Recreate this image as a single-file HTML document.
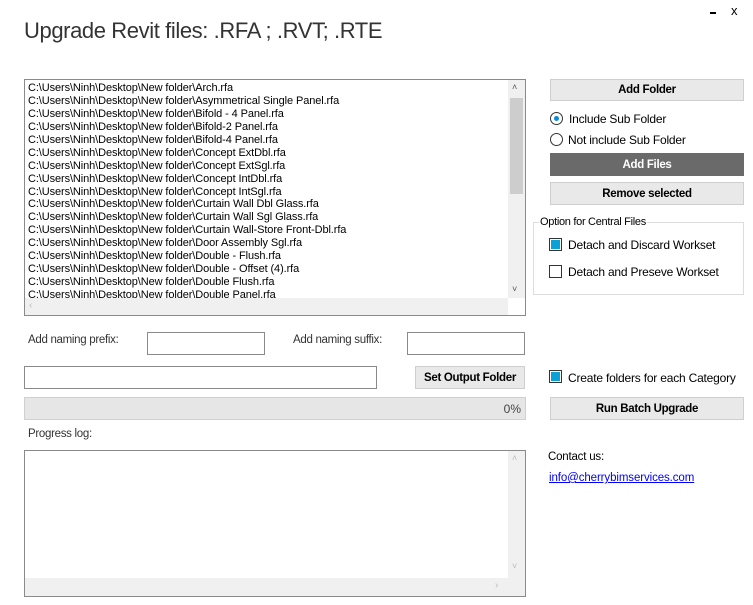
<!DOCTYPE html>
<html><head><meta charset="utf-8"><style>
*{box-sizing:border-box;margin:0;padding:0}
body{width:753px;height:605px;background:#fff;position:relative;overflow:hidden;font-family:"Liberation Sans",sans-serif;color:#000}
.a{position:absolute}
.t{font-size:12px;letter-spacing:-0.2px;white-space:nowrap}
.btn{position:absolute;background:#e9e9e9;border:1px solid #cfcfcf;font-size:11.5px;font-weight:bold;text-align:center;letter-spacing:-0.3px}
.box{position:absolute;border:1px solid #8a8a8a;background:#fff}
.list div{font-size:11px;letter-spacing:-0.1px;height:12.94px;line-height:12.94px;white-space:nowrap}
.cb{position:absolute;width:13px;height:13px;border:1px solid #333;background:#fff}
.cb.on::after{content:"";position:absolute;left:1px;top:1px;width:9px;height:9px;background:#0aa0d8}
.rd{position:absolute;width:13px;height:13px;border:1px solid #333;border-radius:50%;background:#fff}
.rd.on::after{content:"";position:absolute;left:3px;top:3px;width:5px;height:5px;border-radius:50%;background:#0a8ad8}
</style></head><body>
<div class="a" style="left:24px;top:18px;font-size:22px;color:#333;letter-spacing:-0.4px">Upgrade Revit files: .RFA ; .RVT; .RTE</div>
<div class="a" style="left:710px;top:12px;width:6px;height:2px;background:#000"></div>
<div class="a" style="left:731px;top:3px;font-size:13px">x</div>

<div class="box list" style="left:24px;top:79px;width:502px;height:237px;overflow:hidden">
<div style="padding:2px 0 0 3px;height:218px;overflow:hidden">
<div>C:\Users\Ninh\Desktop\New folder\Arch.rfa</div>
<div>C:\Users\Ninh\Desktop\New folder\Asymmetrical Single Panel.rfa</div>
<div>C:\Users\Ninh\Desktop\New folder\Bifold - 4 Panel.rfa</div>
<div>C:\Users\Ninh\Desktop\New folder\Bifold-2 Panel.rfa</div>
<div>C:\Users\Ninh\Desktop\New folder\Bifold-4 Panel.rfa</div>
<div>C:\Users\Ninh\Desktop\New folder\Concept ExtDbl.rfa</div>
<div>C:\Users\Ninh\Desktop\New folder\Concept ExtSgl.rfa</div>
<div>C:\Users\Ninh\Desktop\New folder\Concept IntDbl.rfa</div>
<div>C:\Users\Ninh\Desktop\New folder\Concept IntSgl.rfa</div>
<div>C:\Users\Ninh\Desktop\New folder\Curtain Wall Dbl Glass.rfa</div>
<div>C:\Users\Ninh\Desktop\New folder\Curtain Wall Sgl Glass.rfa</div>
<div>C:\Users\Ninh\Desktop\New folder\Curtain Wall-Store Front-Dbl.rfa</div>
<div>C:\Users\Ninh\Desktop\New folder\Door Assembly Sgl.rfa</div>
<div>C:\Users\Ninh\Desktop\New folder\Double - Flush.rfa</div>
<div>C:\Users\Ninh\Desktop\New folder\Double - Offset (4).rfa</div>
<div>C:\Users\Ninh\Desktop\New folder\Double Flush.rfa</div>
<div>C:\Users\Ninh\Desktop\New folder\Double Panel.rfa</div>
</div>
<div class="a" style="left:483px;top:0;width:17px;height:218px;background:#f0f0f0"></div>
<div class="a" style="left:485px;top:18px;width:13px;height:96px;background:#cdcdcd"></div>
<div class="a" style="left:487px;top:1px;font-size:9px;color:#555">˄</div>
<div class="a" style="left:487px;top:203px;font-size:9px;color:#555">˅</div>
<div class="a" style="left:0;top:218px;width:483px;height:17px;background:#f0f0f0"></div>
<div class="a" style="left:4px;top:220px;font-size:10px;color:#bbb">‹</div>
</div>

<div class="btn" style="left:550px;top:79px;width:194px;height:22px;line-height:20px">Add Folder</div>
<div class="rd on" style="left:550px;top:112px"></div>
<div class="a t" style="left:569px;top:112px">Include Sub Folder</div>
<div class="rd" style="left:550px;top:133px"></div>
<div class="a t" style="left:568px;top:133px">Not include Sub Folder</div>
<div class="btn" style="left:550px;top:153px;width:194px;height:23px;line-height:22px;background:#6a6a6a;border-color:#6a6a6a;color:#fff">Add Files</div>
<div class="btn" style="left:550px;top:182px;width:194px;height:23px;line-height:22px">Remove selected</div>
<div class="a" style="left:533px;top:222px;width:211px;height:73px;border:1px solid #ddd"></div>
<div class="a" style="left:539px;top:216px;background:#fff;padding:0 1px;font-size:11px;letter-spacing:-0.3px">Option for Central Files</div>
<div class="cb on" style="left:549px;top:238px"></div>
<div class="a t" style="left:568px;top:238px">Detach and Discard Workset</div>
<div class="cb" style="left:549px;top:265px"></div>
<div class="a t" style="left:568px;top:265px">Detach and Preseve Workset</div>

<div class="a" style="left:28px;top:334px;font-size:11.5px;color:#333;letter-spacing:-0.3px">Add naming prefix:</div>
<div class="box" style="left:147px;top:332px;width:118px;height:23px"></div>
<div class="a" style="left:293px;top:334px;font-size:11.5px;color:#333;letter-spacing:-0.3px">Add naming suffix:</div>
<div class="box" style="left:407px;top:332px;width:118px;height:23px"></div>

<div class="box" style="left:24px;top:366px;width:353px;height:23px"></div>
<div class="btn" style="left:415px;top:366px;width:110px;height:23px;line-height:22px">Set Output Folder</div>
<div class="cb on" style="left:549px;top:370px"></div>
<div class="a t" style="left:568px;top:371px">Create folders for each Category</div>

<div class="a" style="left:24px;top:397px;width:502px;height:23px;background:#e6e6e6;border:1px solid #d0d0d0;font-size:12px;color:#444;text-align:right;padding-right:4px;line-height:22px">0%</div>
<div class="btn" style="left:550px;top:397px;width:194px;height:23px;line-height:22px">Run Batch Upgrade</div>

<div class="a" style="left:28px;top:428px;font-size:11.5px;color:#333;letter-spacing:-0.3px">Progress log:</div>
<div class="box" style="left:24px;top:450px;width:502px;height:147px">
<div class="a" style="left:483px;top:0;width:17px;height:127px;background:#f0f0f0"></div>
<div class="a" style="left:0;top:127px;width:500px;height:18px;background:#f0f0f0"></div>
<div class="a" style="left:487px;top:2px;font-size:9px;color:#bbb">˄</div>
<div class="a" style="left:487px;top:110px;font-size:9px;color:#bbb">˅</div>
<div class="a" style="left:470px;top:129px;font-size:10px;color:#bbb">›</div>
</div>
<div class="a" style="left:548px;top:451px;font-size:11.5px;letter-spacing:-0.2px">Contact us:</div>
<div class="a" style="left:549px;top:472px;font-size:11.5px;color:#00f;text-decoration:underline;letter-spacing:-0.1px">info@cherrybimservices.com</div>
</body></html>
